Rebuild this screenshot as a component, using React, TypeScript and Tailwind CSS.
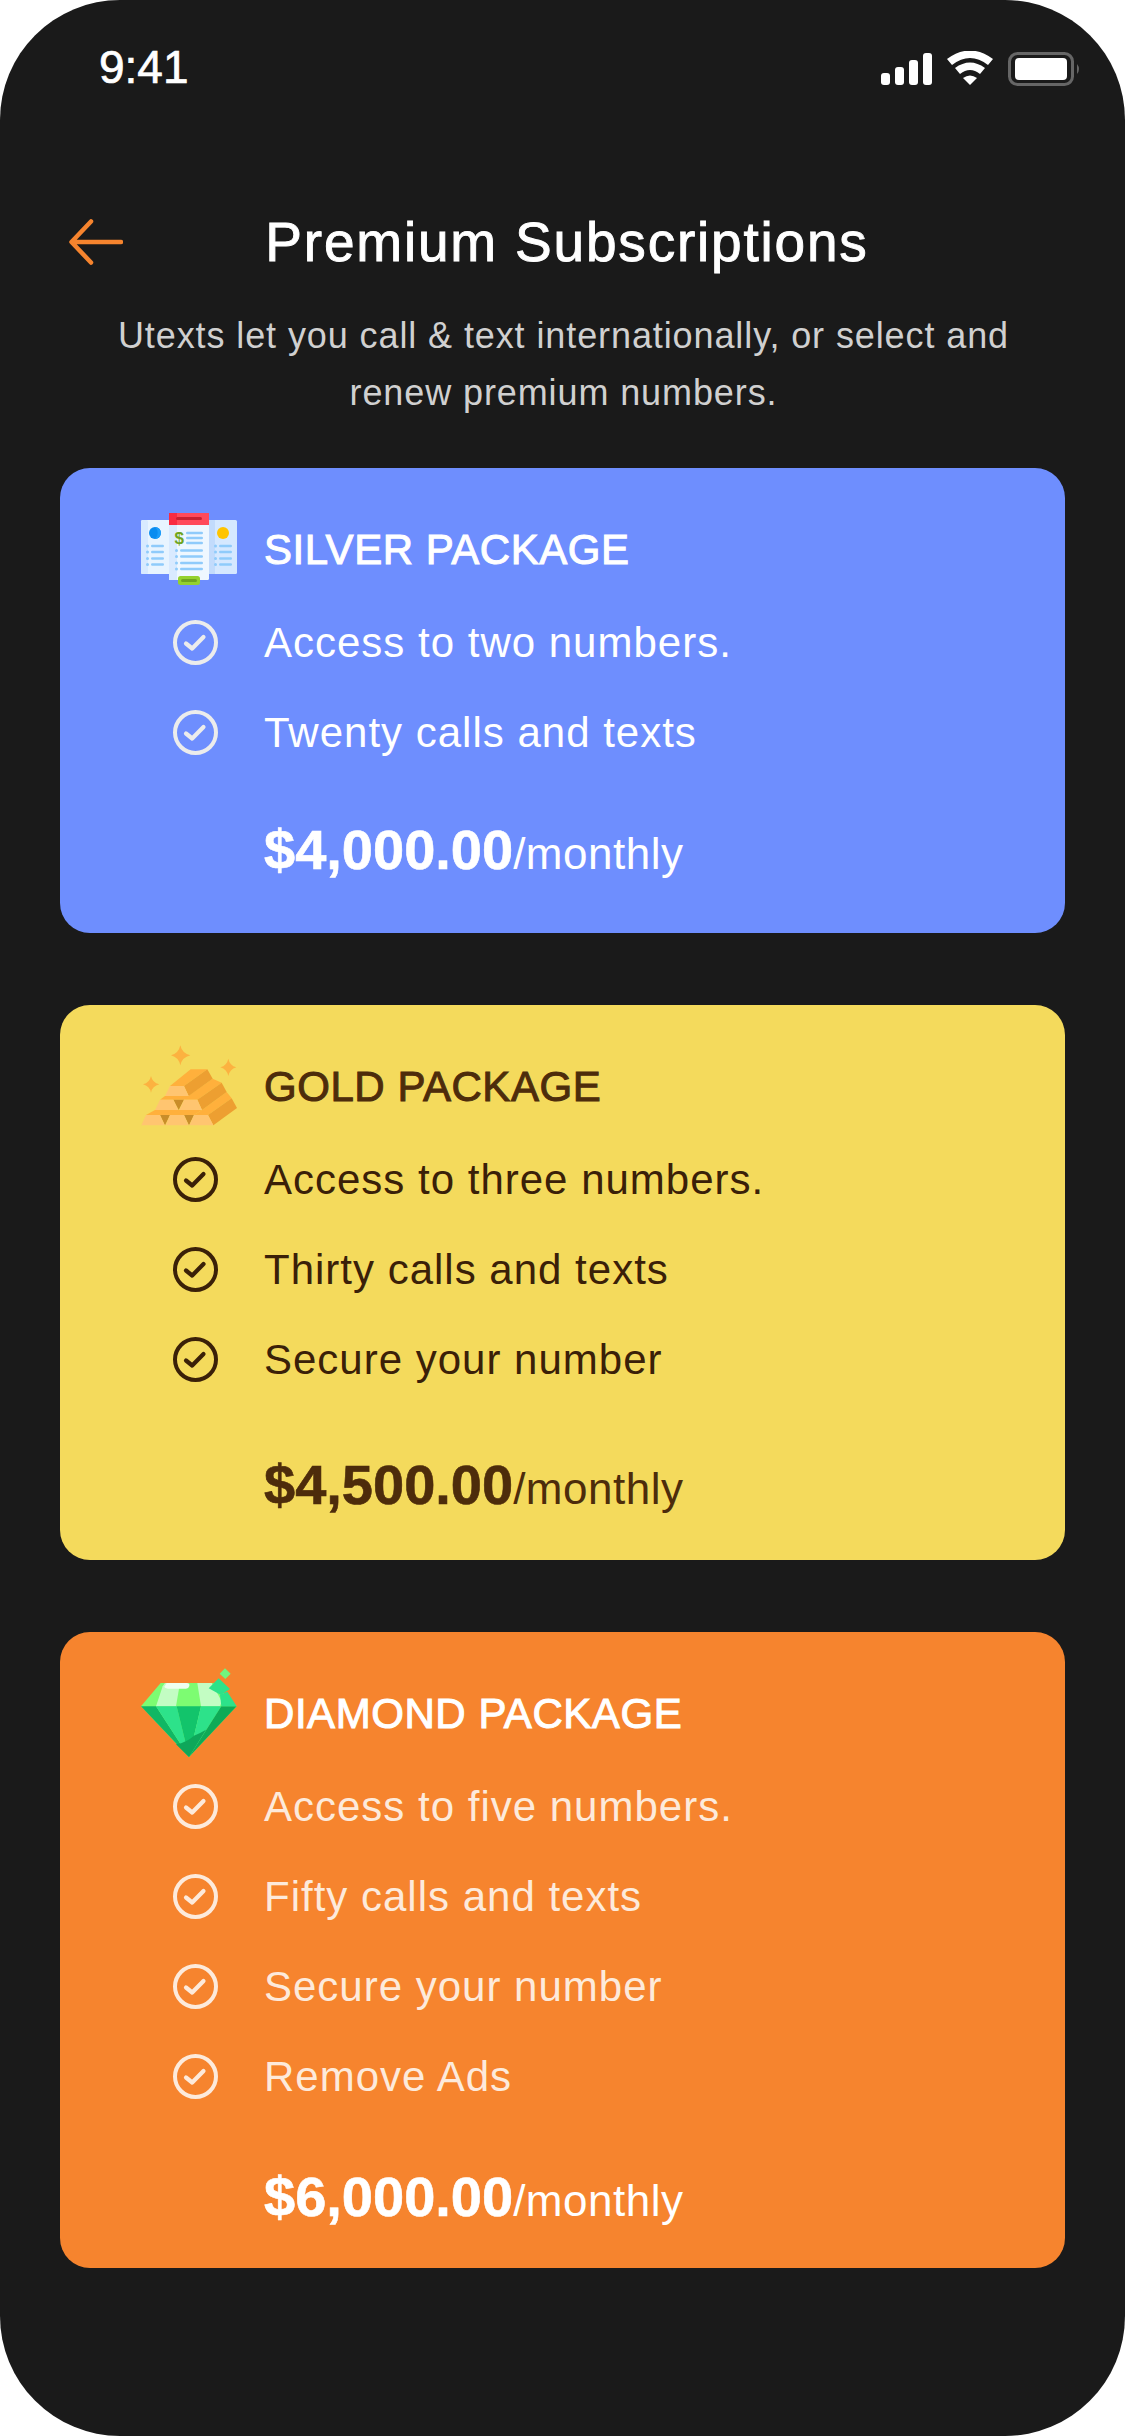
import React from 'react';

const SilverIcon = () => (
  <svg width="100" height="78" viewBox="140 510 100 78" className="shrink-0">
    <rect x="141" y="520" width="30" height="54" rx="1.500" fill="#e8f4ff" />
    <rect x="141" y="520" width="7" height="54" rx="1.500" fill="#d8eaff" />
    <rect x="207" y="520" width="30" height="54" rx="1.500" fill="#d5e8ff" />
    <rect x="209" y="520" width="6" height="54" fill="#c2dbfc" />
    <circle cx="155" cy="533" r="6" fill="#0a8cf0" />
    <path d="M155 527a6 6 0 0 1 0 12a8 8 0 0 0 0-12z" fill="#1c9dfa" />
    <circle cx="223" cy="533" r="6" fill="#ffc400" />
    {[546, 552, 558.5, 564.5].map((y) => (
      <g key={y} fill="#8fcbfb">
        <circle cx="147.500" cy={y} r="1.500" />
        <rect x="151" y={y - 1.25} width="13" height="2.500" rx="1.250" />
        <circle cx="215.500" cy={y} r="1.500" />
        <rect x="219" y={y - 1.25} width="13" height="2.500" rx="1.250" />
      </g>
    ))}
    <rect x="169" y="513" width="40" height="67" rx="1.500" fill="#eef7ff" />
    <rect x="169" y="524" width="8" height="56" fill="#d9eaff" />
    <rect x="169" y="513" width="40" height="12" fill="#ff4a5a" />
    <rect x="169" y="513" width="8" height="12" fill="#f92b42" />
    <rect x="176" y="517" width="26" height="3" rx="1.500" fill="#c9202f" />
    <text x="174.500" y="544" fontSize="17" fontWeight="700" fontFamily="Liberation Sans, sans-serif" fill="#6fa51e">$</text>
    {[533, 538, 543].map((y) => (
      <rect key={y} x="186" y={y - 1.25} width="17" height="2.500" rx="1.250" fill="#8fcbfb" />
    ))}
    {[550.5, 556.5, 563, 569].map((y) => (
      <g key={y} fill="#8fcbfb">
        <circle cx="176.500" cy={y} r="1.500" />
        <rect x="180" y={y - 1.25} width="23" height="2.500" rx="1.250" />
      </g>
    ))}
    <rect x="178" y="576" width="22" height="9" rx="2.500" fill="#94d12e" />
    <rect x="181" y="579" width="16" height="3" rx="1.500" fill="#6fa51e" />
  </svg>
);

const GoldIcon = () => (
  <svg width="100" height="84" viewBox="60 75 300 250" className="shrink-0">
    <g fill="#fcb240">
      <path d="M181 78q5 24 30 30q-25 6-30 30q-5-24-28-30q23-6 28-30z" />
      <path d="M325 118q4 20 24 26q-20 6-24 26q-4-20-24-26q20-6 24-26z" />
      <path d="M93 170q4 20 25 25q-21 5-25 25q-4-20-24-25q20-5 24-25z" />
    </g>
    {/* bottom row */}
    <path d="M78 287L105 272H246L222 287z" fill="#ffb03c" />
    <path d="M246 272L320 218L335 237L264 287H222z" fill="#ffb03c" />
    <path d="M264 287L335 237L351 266L280 318z" fill="#ed9f31" />
    <path d="M120 287H150L135 318z" fill="#c98d2a" />
    <path d="M192 287H222L207 318z" fill="#c98d2a" />
    <path d="M64 318L78 287H120L134 318z" fill="#ffc570" />
    <path d="M137 318L150 287H192L206 318z" fill="#ffc570" />
    <path d="M208 318L222 287H264L280 318z" fill="#ffc570" />
    {/* middle row */}
    <path d="M120 241L135 230H205L278 178L305 190L232 241z" fill="#ffb03c" />
    <path d="M232 241L305 190L320 218L246 272z" fill="#ed9f31" />
    <path d="M160 241H192L176 272z" fill="#c98d2a" />
    <path d="M105 272L120 241H160L175 272z" fill="#ffc570" />
    <path d="M178 272L192 241H232L246 272z" fill="#ffc570" />
    {/* top bar */}
    <path d="M150 200L212 150H262L192 200z" fill="#ffb03c" />
    <path d="M192 200L262 150L278 178L206 230z" fill="#ed9f31" />
    <path d="M135 230L150 200H192L206 230z" fill="#ffc570" />
  </svg>
);

const DiamondIcon = () => (
  <svg width="100" height="94" viewBox="60 50 300 280" className="shrink-0">
    <path d="M122 100H285L350 170L207 322L63 170z" fill="#7dfc72" />
    <path d="M128 110L135 100H180L168 170H108z" fill="#c3fdc3" />
    <path d="M232 100H275L305 155L300 170H243z" fill="#c3fdc3" />
    <path d="M140 100H200Q210 100 208 109Q206 117 198 117H150Q136 117 133 111z" fill="#eefff0" />
    <path d="M63 170H108L207 322z" fill="#10b764" />
    <path d="M108 170H170L207 322z" fill="#2de28a" />
    <path d="M170 170H243L207 322z" fill="#12c46b" />
    <path d="M243 170H304L207 322z" fill="#2de28a" />
    <path d="M304 170H350L207 322z" fill="#0eaa57" />
    <path d="M168 284Q200 278 222 258Q245 248 258 240L207 322z" fill="#0ea75a" />
    <path d="M300 135L322 126L350 170H304z" fill="#2de28a" />
    <path d="M296 86L330 118L303 136L266 116z" fill="#2de28a" />
    <path d="M315 56L332 72L316 88L299 72z" fill="#71f57e" />
  </svg>
);

const CheckRing = ({ color }: { color: string }) => (
  <svg width="45" height="45" viewBox="0 0 45 45" fill="none" stroke={color} className="shrink-0">
    <circle cx="22.500" cy="22.500" r="20.500" strokeWidth="4" />
    <path d="M13 23.500L19.200 28.500L30.500 17" strokeWidth="4.200" strokeLinecap="round" strokeLinejoin="round" />
  </svg>
);

type Pack = {
  name: string;
  price: string;
  features: string[];
  icon: React.ReactNode;
  card: string;
  title: string;
  row: string;
  ring: string;
  priceGap: string;
};

const packs: Pack[] = [
  {
    name: 'SILVER PACKAGE',
    price: '$4,000.00',
    features: ['Access to two numbers.', 'Twenty calls and texts'],
    icon: <SilverIcon />,
    card: 'bg-[#6e8efe] h-[465px]',
    title: 'text-white',
    row: 'text-white',
    ring: '#ececec',
    priceGap: 'mt-[31px]',
  },
  {
    name: 'GOLD PACKAGE',
    price: '$4,500.00',
    features: ['Access to three numbers.', 'Thirty calls and texts', 'Secure your number'],
    icon: <GoldIcon />,
    card: 'bg-[#f4da5c] h-[555px]',
    title: 'text-[#4d2c0b]',
    row: 'text-[#3a2008]',
    ring: '#3a2008',
    priceGap: 'mt-[39px]',
  },
  {
    name: 'DIAMOND PACKAGE',
    price: '$6,000.00',
    features: ['Access to five numbers.', 'Fifty calls and texts', 'Secure your number', 'Remove Ads'],
    icon: <DiamondIcon />,
    card: 'bg-[#f6842e] h-[636px]',
    title: 'text-white',
    row: 'text-[#fdeadb]',
    ring: '#fdeadb',
    priceGap: 'mt-[34px]',
  },
];

const PackageCard = ({ pack }: { pack: Pack }) => (
  <div className={`rounded-[30px] pt-[45px] pl-[80px] ${pack.card}`}>
    <div className="flex h-[72px] items-center gap-[24px]">
      {pack.icon}
      <span className={`text-[42px] tracking-[0.55px] [-webkit-text-stroke:1px] ${pack.title}`}>{pack.name}</span>
    </div>
    <div className="mt-[12px]">
      {pack.features.map((f) => (
        <div key={f} className="flex h-[90px] items-center pl-[33px]">
          <CheckRing color={pack.ring} />
          <span className={`ml-[46px] text-[42px] tracking-[1px] ${pack.row}`}>{f}</span>
        </div>
      ))}
    </div>
    <div className={`ml-[124px] flex h-[60px] items-baseline ${pack.priceGap} ${pack.title}`}>
      <span className="text-[56px] font-bold [-webkit-text-stroke:0.6px]">{pack.price}</span>
      <span className="text-[44px] tracking-[0.5px]">/monthly</span>
    </div>
  </div>
);

export default function App() {
  return (
    <div className="h-[2436px] w-[1125px] bg-white font-['Liberation_Sans',sans-serif]">
      <div className="h-full rounded-[120px] bg-[#1a1a1a]">
        <div className="flex h-[132px] items-start justify-between pl-[99px] pr-[43px] pt-[40px]">
          <span className="text-[46px] leading-[54px] text-white [-webkit-text-stroke:0.7px_white]">9:41</span>
          <svg width="202" height="36" viewBox="880 51 202 36" className="mt-[11px]">
            <g fill="#fff">
              <rect x="881" y="73" width="9" height="12" rx="3" />
              <rect x="895" y="67" width="9" height="18" rx="3" />
              <rect x="909" y="60" width="9" height="25" rx="3" />
              <rect x="923" y="53" width="9" height="32" rx="3" />
              <path d="M947 59Q970 42 993 59L988 65Q970 51 952 65z" />
              <path d="M955 68Q970 57 985 68L980 74Q970 66 960 74z" />
              <path d="M963 78Q970 73 977 78L970 85z" />
              <rect x="1015" y="58" width="52" height="22" rx="4" />
            </g>
            <rect x="1009.500" y="53.500" width="63" height="31" rx="8" fill="none" stroke="#666" strokeWidth="3" />
            <path d="M1077 64Q1081 69 1077 74z" fill="#666" />
          </svg>
        </div>

        <div className="mt-[80px] grid h-[60px] grid-cols-[1fr_auto_1fr] items-center pl-[69px]">
          <svg width="54" height="46" viewBox="0 0 54 46" fill="none" stroke="#f6842e" strokeWidth="4.500" strokeLinecap="round" strokeLinejoin="round">
            <path d="M22 2.500L2.500 23L22 43.500M3 23H52" />
          </svg>
          <h1 className="-translate-x-[30px] text-[55px] leading-[60px] tracking-[1.8px] text-white [-webkit-text-stroke:0.9px_white]">Premium Subscriptions</h1>
          <span />
        </div>

        <p className="mt-[35px] pl-[2px] text-center text-[36px] leading-[57px] tracking-[0.9px] text-[#d0d0d0]">
          Utexts let you call &amp; text internationally, or select and
          <br />
          renew premium numbers.
        </p>

        <div className="mt-[47px] flex flex-col gap-[72px] px-[60px]">
          {packs.map((p) => (
            <PackageCard key={p.name} pack={p} />
          ))}
        </div>
      </div>
    </div>
  );
}
